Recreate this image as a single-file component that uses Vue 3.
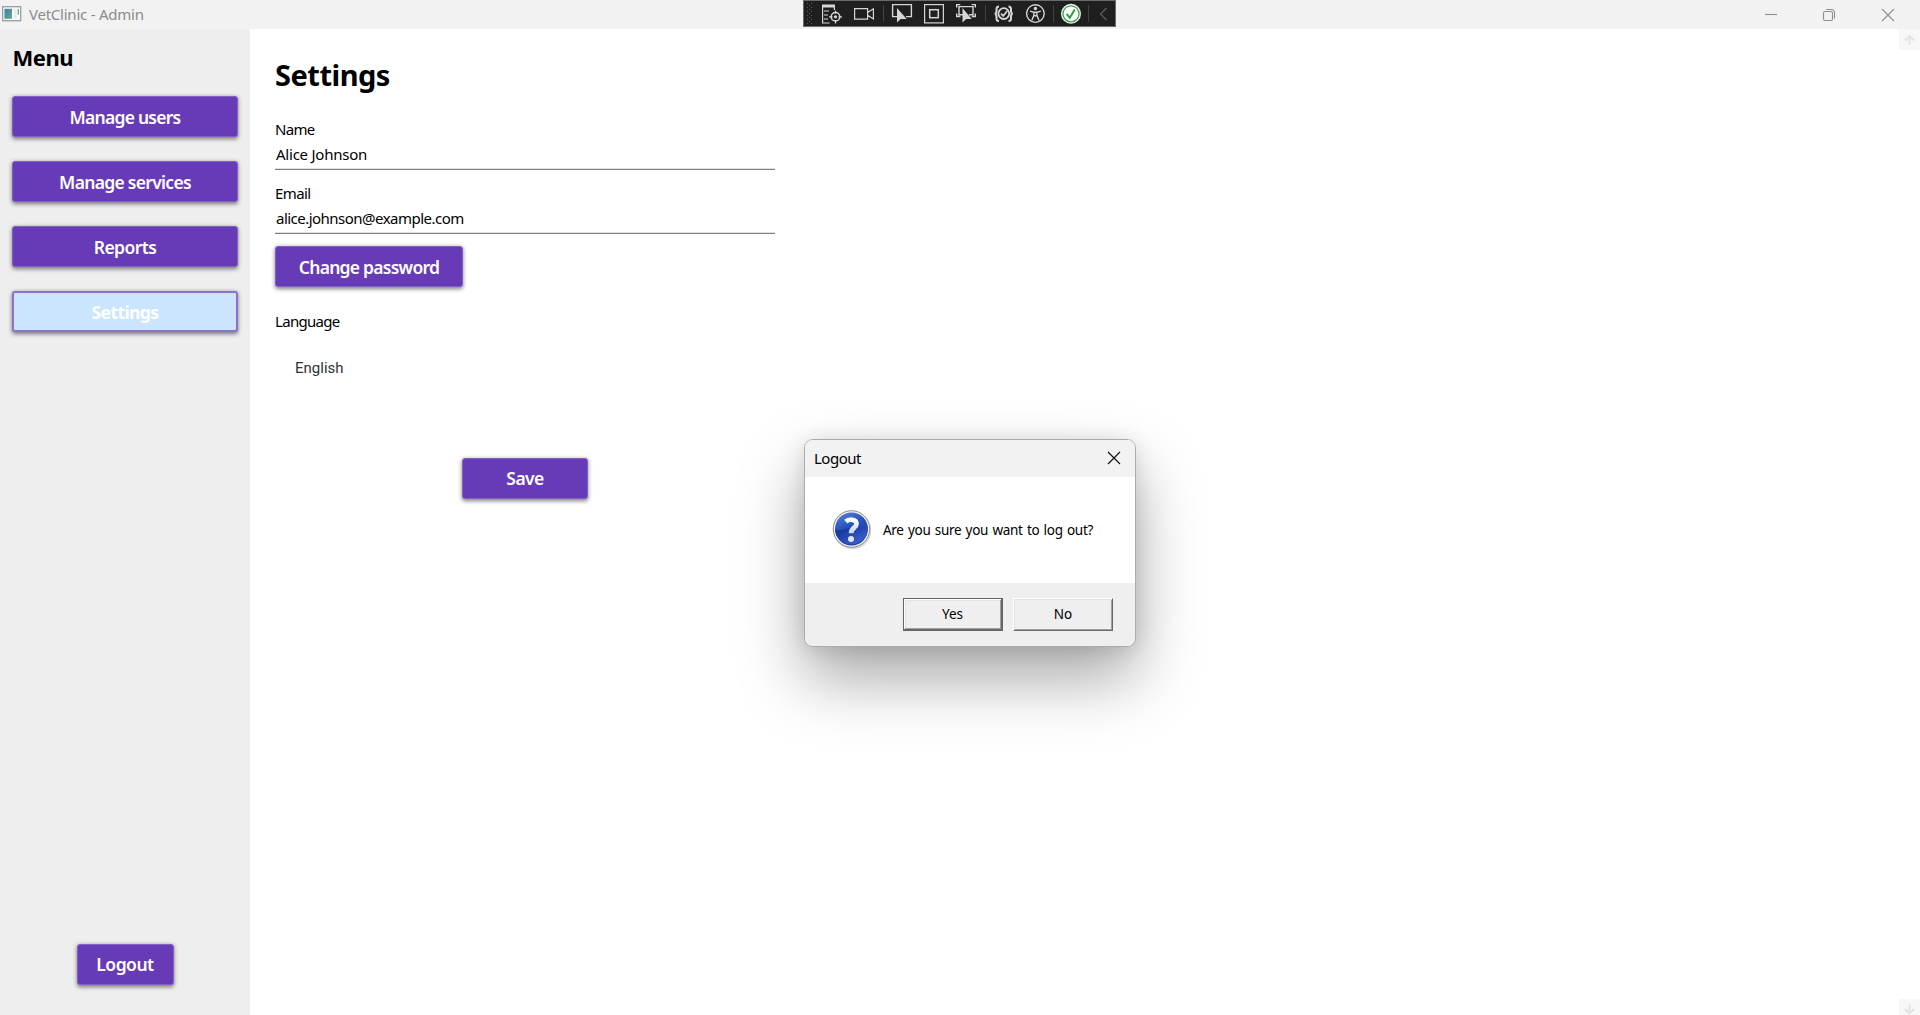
<script setup>
const menu = [
  { label: 'Manage users', cls: 'w-users' },
  { label: 'Manage services', cls: 'w-services' },
  { label: 'Reports', cls: 'w-reports' },
  { label: 'Settings', cls: 'w-settings', active: true },
]
</script>

<template>
  <div class="window">
    <header class="titlebar">
      <svg class="app-icon" width="20" height="16" viewBox="0 0 20 16">
        <defs><linearGradient id="appg" x1="0" y1="0" x2="1" y2="1"><stop offset="0" stop-color="#3d7fa6" /><stop offset="1" stop-color="#5fae86" /></linearGradient></defs>
        <rect x=".7" y=".7" width="18" height="14" fill="#fafafa" stroke="#969da6" stroke-width="1.3" />
        <rect x="2.5" y="2.8" width="7.5" height="10" fill="url(#appg)" />
        <rect x="12" y="2.8" width="2.5" height="10" fill="#e8ecef" />
        <rect x="15.6" y="2.8" width="1.4" height="6" fill="#6fb58c" />
      </svg>
      <span class="t title">VetClinic - Admin</span>
      <div class="controls">
        <svg width="14" height="14" viewBox="0 0 14 14"><path d="M2 6.500h12" /></svg>
        <svg width="14" height="14" viewBox="0 0 14 14"><rect x="1.500" y="3.500" width="9" height="9" rx="1.500" /><path d="M4 1.500h5.500a3 3 0 0 1 3 3V10.500" /></svg>
        <svg width="14" height="14" viewBox="0 0 14 14"><path d="M1 1l12 12M13 1L1 13" /></svg>
      </div>
    </header>

    <div class="debugbar">
      <svg width="313" height="27" viewBox="0 0 313 27" fill="none">
        <rect x=".5" y=".5" width="312" height="26" fill="#1f1f1f" stroke="#6b6b6b" />
        <g stroke="#5a5a5a" stroke-width="1" stroke-dasharray="1 3">
          <path d="M4.500 3v22M8.500 3v22" /><path d="M6.500 5v20" />
        </g>
        <path d="M80.500 5v17M182.500 5v17M250.500 5v17M285.500 5v17" stroke="#424242" />
        <g stroke="#d6d6d6" stroke-width="1.2">
          <path d="M19 4.500h13v3H19z" fill="#d6d6d6" stroke="none" />
          <path d="M19.600 7v16h7M21 11h5M21 15h4M21 19h4M31.400 7v3" />
          <circle cx="32.500" cy="16.800" r="4.300" stroke-width="1.500" /><circle cx="32.500" cy="16.800" r="1" fill="#d6d6d6" />
          <path d="M32.500 10.500v3M32.500 20v3.500M26 16.800h3.500M35.500 16.800H39" />
          <path d="M51.600 8.600h13v10.600h-13zM64.600 12.500l5.800-3.700v10.200l-5.800-3.700" />
          <path d="M94 16.600h-4.400V4.600h18.800v12H103" stroke-width="1.400" />
          <path d="M94 8v14.500l3.700-3.400h6z" fill="#d6d6d6" stroke="none" />
          <rect x="121.600" y="4.600" width="18.800" height="18.300" /><rect x="126.700" y="9.700" width="8.600" height="8" stroke-width="1.500" />
          <path d="M153.700 7.500V4.600h3.600M168.700 4.600h3.600v2.900M172.300 13.500v3h-3.600M157.300 16.500h-3.600v-3M160 14.800h-4V6.600h14v8.200h-4" stroke-width="1.400" />
          <path d="M159.500 8v14.500l3.700-3.400h5.500z" fill="#d6d6d6" stroke="none" />
          <path d="M196 6.500c-2 0-2.500 1-2.500 2.500v2c0 1.500-.4 2.500-1.700 2.700 1.300.2 1.700 1.200 1.700 2.700v2c0 1.500.5 2.500 2.500 2.500M205.500 6.500c2 0 2.500 1 2.500 2.500v2c0 1.500.4 2.500 1.700 2.700-1.300.2-1.700 1.200-1.700 2.700v2c0 1.500-.5 2.500-2.500 2.500" stroke-width="2" />
          <circle cx="200.800" cy="13.600" r="5.400" stroke-width="1.800" />
          <path d="M198 13.600l2.200 2.300 4-4.900" stroke-width="1.700" />
          <circle cx="232.400" cy="13.600" r="8.800" stroke-width="1.400" /><circle cx="232.400" cy="8.500" r="1.700" fill="#d6d6d6" stroke="none" />
          <path d="M227 11.200l3.900 1.100v3l-2 5M237.800 11.200l-3.900 1.100v3l2 5M230.900 12.300h3M231 15.800h2.800" stroke-width="1.400" />
        </g>
        <circle cx="268" cy="13.800" r="10" fill="#f2f2f2" /><circle cx="268" cy="13.800" r="8" fill="#fff" stroke="#37a745" stroke-width="1.300" />
        <path d="M263.600 13.800l3.200 4 5-8.400" stroke="#2f9e3d" stroke-width="2" />
        <path d="M303.500 8l-6 6 6 6" stroke="#5c5c5c" stroke-width="1.300" />
      </svg>
    </div>

    <div class="content">
      <aside class="sidebar">
        <h2><span class="t menu-title">Menu</span></h2>
        <nav>
          <button v-for="m in menu" :key="m.label" class="btn" :class="{ active: m.active }"><span class="t" :class="m.cls">{{ m.label }}</span></button>
        </nav>
        <button class="btn logout"><span class="t w-logout">Logout</span></button>
      </aside>

      <main>
        <h1><span class="t heading">Settings</span></h1>
        <label><span class="t l-name">Name</span></label>
        <div class="field"><span class="t f-name">Alice Johnson</span></div>
        <label class="second"><span class="t l-email">Email</span></label>
        <div class="field"><span class="t f-email">alice.johnson@example.com</span></div>
        <button class="btn change"><span class="t w-change">Change password</span></button>
        <label class="lang"><span class="t l-lang">Language</span></label>
        <div class="select"><span class="t">English</span></div>
        <button class="btn save"><span class="t w-save">Save</span></button>
      </main>

      <div class="scroll">
        <div class="arrow"><svg width="21" height="21" viewBox="0 0 21 21"><path d="M10.500 16V7M6 11.500l4.500-4.500 4.500 4.500" /></svg></div>
        <div class="arrow"><svg width="21" height="21" viewBox="0 0 21 21"><path d="M10.500 5.500v9M6 10l4.500 4.500L15 10" /></svg></div>
      </div>
    </div>

    <section class="dialog">
      <div class="dialog-head">
        <span class="t d-title">Logout</span>
        <svg width="14" height="14" viewBox="0 0 14 14"><path d="M1 1l12 12M13 1L1 13" /></svg>
      </div>
      <div class="dialog-body">
        <svg width="42" height="42" viewBox="0 0 42 42">
          <defs>
            <linearGradient id="qg" x1="0" y1="0" x2="0.500" y2="1"><stop offset="0" stop-color="#5b86dd" /><stop offset=".5" stop-color="#2450bb" /><stop offset="1" stop-color="#1c3fae" /></linearGradient>
            <linearGradient id="ql" x1="0" y1="0" x2="1" y2="1"><stop offset="0" stop-color="#0b2a8c" /><stop offset="1" stop-color="#4468dc" /></linearGradient>
            <linearGradient id="qt" x1="0" y1="0" x2="0" y2="1"><stop offset="0" stop-color="#fff" /><stop offset="1" stop-color="#c9d2ea" /></linearGradient>
          </defs>
          <circle cx="21.500" cy="21.500" r="18.700" fill="#d5d5d5" />
          <circle cx="20.500" cy="20" r="18.300" fill="#f0f0f0" stroke="#8c8c8c" stroke-width="1" />
          <circle cx="20.500" cy="20" r="16.500" fill="url(#qg)" />
          <path d="M4 21C13 23 20 15 36.800 17.500A16.500 16.500 0 0 1 4 21z" fill="url(#ql)" />
          <path d="M14.800 12.600c3.300-3 10.700-2.600 10.700 2.200 0 4.400-5.400 4-5.400 9.400" fill="none" stroke="url(#qt)" stroke-width="4.800" />
          <circle cx="20" cy="30" r="3" fill="#dfe5f5" />
        </svg>
        <span class="t d-msg">Are you sure you want to log out?</span>
      </div>
      <div class="dialog-foot">
        <button class="win default"><span class="t">Yes</span></button>
        <button class="win"><span class="t">No</span></button>
      </div>
    </section>
  </div>
</template>

<style>
body { margin: 0; background: #fff; overflow: hidden; }
</style>

<style scoped>
* { box-sizing: border-box; }
.window { position: relative; width: 1920px; height: 1015px; display: flex; flex-direction: column; overflow: hidden; background: #fff; font-family: "Noto Sans", "Open Sans", sans-serif; font-size: 15px; color: #000; }
.t { white-space: nowrap; }
h1, h2 { margin: 0; }
button { font-family: inherit; margin: 0; padding: 0; }
.titlebar { height: 29px; flex: none; display: flex; align-items: center; background: #f2f2f2; padding-left: 2px; color: #8b8b8b; }
.app-icon { margin-right: 7px; margin-bottom: 1px; }
.title { line-height: 29px; letter-spacing: -.24px; }
.controls { margin-left: auto; display: flex; gap: 45px; padding-right: 25px; }
.controls svg { fill: none; stroke: #8f8f8f; stroke-width: 1.1; }
.debugbar { position: absolute; left: 803px; top: 0; height: 27px; }
.debugbar svg { display: block; }
.content { flex: 1; display: flex; min-height: 0; }
.sidebar { width: 250px; background: #eee; padding: 16px 12px 30px; display: flex; flex-direction: column; }
.sidebar h2 { font-size: 22px; line-height: 24px; height: 51px; font-weight: 700; letter-spacing: -.5px; padding-left: .5px; }
nav { display: flex; flex-direction: column; gap: 24px; }
.btn { height: 41px; flex: none; border: 1px solid #8360c2; border-radius: 3px; background: #673ab7; color: #fff; font-size: 17.5px; font-weight: 600; line-height: 38px; padding-top: 1px; box-shadow: 0 1.5px 4px rgba(0, 0, 0, .5); }
.btn.active { background: #cce5ff; border: 2px solid #8f72c6; line-height: 36px; font-weight: 700; }
.w-users { letter-spacing: -.75px; }
.w-services { letter-spacing: -.7px; }
.w-reports, .w-settings { letter-spacing: -.58px; }
.w-save { letter-spacing: -.6px; }
.w-logout { letter-spacing: -.5px; }
.w-change { letter-spacing: -.74px; }
.logout { margin-top: auto; align-self: center; width: 97px; padding: 0 0 2px; line-height: 36px; }
main { flex: 1; padding: 26px 0 0 25px; display: flex; flex-direction: column; align-items: flex-start; }
h1 { font-size: 29px; line-height: 40px; height: 64px; font-weight: 700; letter-spacing: -.5px; }
label { line-height: 20px; height: 20px; }
.l-name { letter-spacing: -.7px; }
.l-email { letter-spacing: -.6px; }
.l-lang { letter-spacing: -.7px; }
.f-name { letter-spacing: -.23px; }
.f-email { letter-spacing: -.52px; }
.field { width: 500px; height: 31px; padding: 5px 0 0 1px; line-height: 20px; border-bottom: 1px solid #808080; box-shadow: inset 0 -1px 0 #dedede; }
.second { margin-top: 13px; }
.change { width: 188px; margin-top: 12px; }
.lang { margin-top: 24px; }
.select { font-family: Roboto, sans-serif; color: #333; padding-left: 20px; line-height: 20px; margin-top: 27px; height: 20px; }
.save { width: 126px; margin: 80px 0 0 187px; padding: 0 0 2px; line-height: 36px; }
.scroll { width: 21px; display: flex; flex-direction: column; justify-content: space-between; margin-bottom: -5px; }
.arrow { height: 21px; background: #f7f7f7; }
.arrow svg { display: block; fill: none; stroke: #e2e2e2; stroke-width: 1.8; }
.dialog { position: absolute; left: 804px; top: 439px; width: 332px; height: 208px; border: 1px solid #ababab; border-radius: 9px; background: #fff; overflow: hidden; display: flex; flex-direction: column; box-shadow: 0 32px 64px rgba(0, 0, 0, .34), 0 2px 20px rgba(0, 0, 0, .12); }
.dialog-head { height: 37px; flex: none; background: #f2f2f2; display: flex; align-items: center; justify-content: space-between; padding: 0 14px 2px 9px; }
.dialog-head svg { fill: none; stroke: #111; stroke-width: 1.2; margin-top: 1px; }
.d-title { letter-spacing: -.5px; }
.dialog-body { flex: 1; display: flex; align-items: flex-start; padding: 32px 0 0 26px; }
.d-msg { font-size: 13.5px; line-height: 20px; margin: 11px 0 0 10px; letter-spacing: -.29px; word-spacing: 1.05px; }
.dialog-foot { height: 63px; flex: none; background: #efefef; display: flex; justify-content: flex-end; gap: 10px; padding: 15px 22px 0 0; }
.win { width: 100px; height: 33px; padding: 0 0 2px; background: #efefef; border: 1px solid; border-color: #fff #696969 #696969 #fff; box-shadow: inset 1px 1px 0 #e3e3e3, inset -1px -1px 0 #a0a0a0; font-size: 13.5px; color: #000; }
.win.default { padding-right: 1px; border-color: #646464; box-shadow: inset -1px -1px 0 #696969, inset 1px 1px 0 #fff, inset -2px -2px 0 #a0a0a0, inset 2px 2px 0 #e3e3e3; }
</style>
